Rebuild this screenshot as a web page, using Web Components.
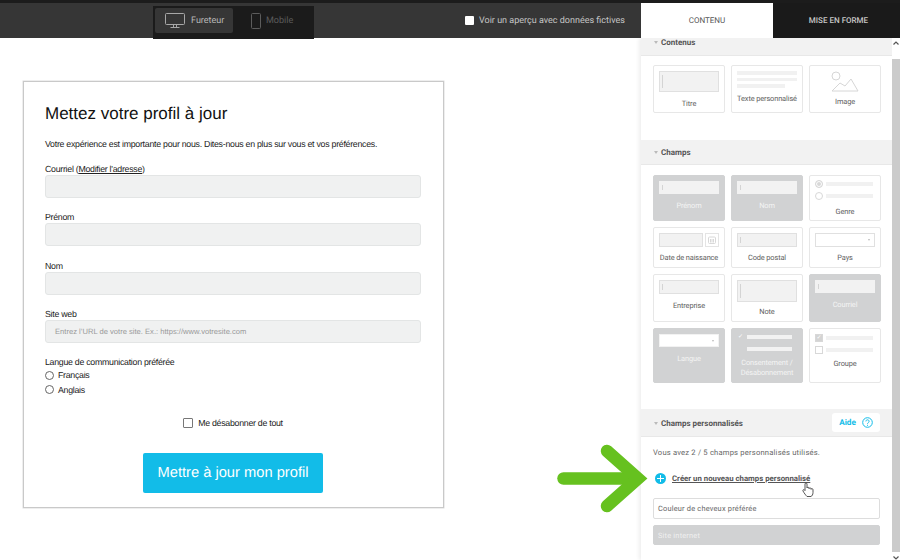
<!DOCTYPE html>
<html lang="fr">
<head>
<meta charset="utf-8">
<title>Profil</title>
<style>
  html, body { margin: 0; padding: 0; background: #fff; }
  body { width: 900px; height: 560px; overflow: hidden; position: relative; font-family: "Liberation Sans", Arial, sans-serif; text-rendering: geometricPrecision; }
</style>
</head>
<body>
<app-topbar></app-topbar>
<editor-main>
  <profile-form></profile-form>
  <side-panel></side-panel>
</editor-main>
<green-arrow></green-arrow>
<hand-cursor></hand-cursor>

<script>
class AppTopbar extends HTMLElement {
  constructor() {
    super();
    this.shadowDOM = this.attachShadow({ mode: "open" });
  }
  connectedCallback() {
    this.shadowDOM.innerHTML = `
      <style>
        :host { display: flex; height: 35px; background: #363636; border-top: 3px solid #1c1c1c; font-family: Roboto, sans-serif; }
        .left { width: 153px; }
        .switch { display: flex; width: 157px; height: 29px; margin-top: 3px; padding: 2px; background: #1b1b1b; }
        .btn { display: flex; align-items: center; height: 25px; font-size: 9px; }
        .on { width: 78px; background: #363636; border-radius: 2px; color: #b9b9b9; }
        .on svg { margin: 0 6px 0 10px; }
        .off { color: #5c5c5c; }
        .off svg { margin: 0 5px 0 18px; }
        .preview { display: flex; align-items: center; margin-left: 151px; width: 176px; font-size: 9px; color: #c4c4c4; white-space: nowrap; }
        .box { width: 9px; height: 9px; background: #fff; border-radius: 1px; margin-right: 5px; }
        .tab { display: flex; align-items: center; justify-content: center; box-sizing: border-box; font-size: 8px; }
        .content { width: 132px; background: #fff; color: #555; }
        .style { width: 127px; padding-left: 4px; background: #1a1a1a; color: #c8c8c8; font-weight: 500; }
      </style>
      <div class="left"></div>
      <div class="switch">
        <div class="btn on">
          <svg width="20" height="15" viewBox="0 0 20 15" fill="none" stroke="#a8a8a8" stroke-width="1"><rect x=".5" y=".5" width="19" height="11" rx="1"/><path d="M8.5 12v2M11.5 12v2M5.5 14.5h9"/></svg>
          <span>Fureteur</span>
        </div>
        <div class="btn off">
          <svg width="10" height="16" viewBox="0 0 10 16" fill="none" stroke="#5c5c5c" stroke-width="1"><rect x=".5" y=".5" width="9" height="15" rx="1"/></svg>
          <span>Mobile</span>
        </div>
      </div>
      <div class="preview"><div class="box"></div><span>Voir un aperçu avec données fictives</span></div>
      <div class="tab content">CONTENU</div>
      <div class="tab style">MISE EN FORME</div>`;
  }
}

class EditorMain extends HTMLElement {
  constructor() {
    super();
    this.shadowDOM = this.attachShadow({ mode: "open" });
  }
  connectedCallback() {
    this.shadowDOM.innerHTML = `
      <style>
        :host { display: flex; justify-content: space-between; height: 522px; overflow: hidden; }
      </style>
      <slot></slot>`;
  }
}

class FormField extends HTMLElement {
  constructor() {
    super();
    this.shadowDOM = this.attachShadow({ mode: "open" });
  }
  connectedCallback() {
    const hint = this.getAttribute("hint") || "";
    this.shadowDOM.innerHTML = `
      <style>
        :host { display: block; height: 48.3px; font-size: 8.8px; letter-spacing: -.28px; color: #222; }
        .lab { height: 12px; line-height: 12px; }
        .input { box-sizing: border-box; height: 23px; padding-left: 9px; line-height: 21px; background: #f0f1f1; border: 1px solid #e3e5e5; border-radius: 3px; font-size: 7.6px; letter-spacing: 0; color: #999; }
        ::slotted(a) { color: #222; }
      </style>
      <div class="lab"><slot></slot></div>
      <div class="input">${hint}</div>`;
  }
}

class ProfileForm extends HTMLElement {
  constructor() {
    super();
    this.shadowDOM = this.attachShadow({ mode: "open" });
  }
  connectedCallback() {
    this.shadowDOM.innerHTML = `
      <style>
        :host { display: block; box-sizing: border-box; width: 421px; height: 427px; margin: 43px 0 0 23px; padding: 21px 22px 0 21px; border: 1px solid #c9c9c9; box-shadow: 0 0 0 .5px #ddd; color: #222; }
        h1 { margin: 0; font-size: 17px; line-height: 21px; font-weight: 400; color: #111; }
        p { margin: 14px 0 13px; font-size: 8.8px; letter-spacing: -.27px; line-height: 12px; white-space: nowrap; }
        .lang { font-size: 8.8px; letter-spacing: -.28px; line-height: 12px; }
        .radio { display: flex; align-items: center; gap: 4px; height: 14.5px; }
        .radio i { width: 7px; height: 7px; border: 1px solid #666; border-radius: 50%; }
        .unsub { display: flex; justify-content: center; align-items: center; gap: 5px; margin-top: 19px; height: 14px; font-size: 8.8px; letter-spacing: -.28px; }
        .unsub i { box-sizing: border-box; width: 10px; height: 10px; border: 1px solid #777; border-radius: 1px; }
        .cta { width: 180px; height: 40px; margin: 23px auto 0; line-height: 41px; text-align: center; background: #12bce8; border-radius: 2px; color: #fff; font-size: 14.7px; }
      </style>
      <h1>Mettez votre profil à jour</h1>
      <p>Votre expérience est importante pour nous. Dites-nous en plus sur vous et vos préférences.</p>
      <form-field>Courriel (<a href="#">Modifier l'adresse</a>)</form-field>
      <form-field>Prénom</form-field>
      <form-field>Nom</form-field>
      <form-field hint="Entrez l’URL de votre site. Ex.: https://www.votresite.com">Site web</form-field>
      <div class="lang">
        <div>Langue de communication préférée</div>
        <div class="radio"><i></i><span>Français</span></div>
        <div class="radio"><i></i><span>Anglais</span></div>
      </div>
      <div class="unsub"><i></i><span>Me désabonner de tout</span></div>
      <div class="cta">Mettre à jour mon profil</div>`;
  }
}

class PanelHead extends HTMLElement {
  constructor() {
    super();
    this.shadowDOM = this.attachShadow({ mode: "open" });
  }
  connectedCallback() {
    this.shadowDOM.innerHTML = `
      <style>
        :host { display: flex; align-items: center; box-sizing: border-box; padding: 1px 12px 0 13px; background: #f2f2f2; border-bottom: 1px solid #e8e8e8; font-size: 8px; font-weight: 700; color: #555; }
        .tri { width: 0; height: 0; margin-right: 3px; border: 2px solid transparent; border-top: 3px solid #bbb; border-bottom: 0; }
        .txt { flex: 1; }
      </style>
      <span class="tri"></span><span class="txt"><slot></slot></span><slot name="extra"></slot>`;
  }
}

class FieldCard extends HTMLElement {
  constructor() {
    super();
    this.shadowDOM = this.attachShadow({ mode: "open" });
  }
  connectedCallback() {
    const kind = this.getAttribute("kind") || "input";
    const h = this.getAttribute("box") || 14;
    const gap = this.getAttribute("gap") || 6;
    const top = this.getAttribute("pad") || 5;
    const art = {
      input: `<div class="box" style="height:${h}px"><b class="caret"></b></div>`,
      select: `<div class="box white" style="height:${h}px"><b class="down"></b></div>`,
      date: `<div class="row6"><div class="box grow" style="height:${h}px"></div><div class="cal"><svg width="8" height="8" viewBox="0 0 8 8" fill="none" stroke="#d8d8d8"><rect x=".5" y="1" width="7" height="6.5" rx="1"/><path d="M2.5 3v3.5M4 3v3.5M5.5 3v3.5"/></svg></div></div>`,
      text: `<div class="lines"><u></u><u></u><u style="width:48px"></u></div>`,
      image: `<svg class="pic" width="28" height="21" viewBox="0 0 28 21" fill="none" stroke="#d6d6d6" stroke-width="1"><circle cx="5" cy="5" r="4"/><path d="M1 20l8-8 5 3 6-7 7 12z"/></svg>`,
      radio: `<div class="opts"><div><i class="dot on"></i><u></u></div><div><i class="dot"></i><u></u></div></div>`,
      check: `<div class="opts"><div><i class="sq on">✓</i><u></u></div><div><i class="sq"></i><u></u></div></div>`,
      consent: `<div class="opts consent"><div><span class="tick">✓</span><u></u></div><div><span class="tick"></span><u></u></div></div>`
    }[kind];
    this.shadowDOM.innerHTML = `
      <style>
        :host { display: block; box-sizing: border-box; padding: ${top}px 5px 0; background: #fff; border: 1px solid #e7e7e7; border-radius: 2px; font-size: 7.4px; letter-spacing: -.12px; line-height: 9.5px; color: #5e5e5e; text-align: center; }
        :host([active]) { background: #d1d2d3; border-color: #d1d2d3; color: #f4f4f4; }
        .lab { margin: ${gap}px -4px 0; }
        .box { position: relative; box-sizing: border-box; background: #f2f2f2; border: 1px solid #e0e0e0; }
        :host([active]) .box { border-color: #f2f2f2; }
        .white, :host([active]) .white { background: #fff; }
        .caret { position: absolute; left: 2px; top: 3px; bottom: 3px; width: 1px; background: #d4d4d4; }
        .down { position: absolute; right: 4px; top: 5px; border: 1.5px solid transparent; border-top: 2px solid #bbb; border-bottom: 0; }
        .row6 { display: flex; gap: 2px; }
        .grow { flex: 1; }
        .cal { display: flex; align-items: center; justify-content: center; width: 14px; border: 1px solid #e4e4e4; box-sizing: border-box; }
        .lines { display: flex; flex-direction: column; gap: 3px; }
        .lines u { display: block; width: 60px; height: 3.5px; background: #f1f1f1; }
        .pic { display: block; margin: 0 auto; }
        .opts { display: flex; flex-direction: column; gap: 4px; }
        .opts div { display: flex; align-items: center; gap: 3px; height: 8px; }
        .opts u { display: block; width: 47px; height: 4px; background: #f1f1f1; }
        .consent u { width: 45px; background: #f2f2f2; }
        .dot { box-sizing: border-box; width: 8px; height: 8px; border: 1px solid #d8d8d8; border-radius: 50%; }
        .dot.on { background: #d8d8d8; box-shadow: inset 0 0 0 1px #fff; }
        .sq { box-sizing: border-box; width: 8px; height: 8px; border: 1px solid #d8d8d8; font: 700 6px/6px "DejaVu Sans", sans-serif; color: #fff; text-align: center; }
        .sq.on { background: #d4d4d4; }
        .tick { width: 7px; font: 700 6px/8px "DejaVu Sans", sans-serif; color: #fff; }
      </style>
      ${art}
      <div class="lab"><slot></slot></div>`;
  }
}

class CardGrid extends HTMLElement {
  constructor() {
    super();
    this.shadowDOM = this.attachShadow({ mode: "open" });
  }
  connectedCallback() {
    this.shadowDOM.innerHTML = `
      <style>
        :host { display: grid; grid-template-columns: 72px 72px 72px; column-gap: 6px; row-gap: 6px; grid-template-rows: var(--rows); }
      </style>
      <slot></slot>`;
  }
}

class SidePanel extends HTMLElement {
  constructor() {
    super();
    this.shadowDOM = this.attachShadow({ mode: "open" });
  }
  connectedCallback() {
    this.shadowDOM.innerHTML = `
      <style>
        :host { display: flex; width: 259px; height: 522px; background: #fff; box-shadow: -2px 0 4px rgba(0,0,0,.07); font-family: Roboto, sans-serif; }
        .col { width: 251px; }
        .bar { display: flex; flex-direction: column; width: 8px; }
        .arrow { height: 21px; padding-top: 3px; box-sizing: border-box; }
        .thumb { height: 493px; background: #cbcbcb; }
        .end { flex: 1; padding-top: 4px; box-sizing: border-box; }
        .bar svg { display: block; margin: 0 auto; }
        .sec1 { height: 18px; padding-bottom: 9px; }
        .sec2 { height: 25px; }
        .sec3 { height: 28px; }
        .body1 { height: 75px; padding: 9px 12px 0; --rows: 48px; }
        .body2 { height: 234px; padding: 10px 12px 0; --rows: 46px 41px 48px 55px; }
        .aide { display: flex; align-items: center; justify-content: center; gap: 6px; width: 48px; height: 19px; margin-top: -1px; background: #fff; border-radius: 3px; color: #12bce8; font-size: 8.2px; font-weight: 700; }
        .body3 { padding: 0 12px; font-size: 7.6px; color: #666; letter-spacing: .2px; }
        .count { margin-top: 11px; line-height: 10px; }
        .create { display: flex; align-items: center; gap: 6px; margin: 14px 0 0 2px; height: 12px; font-weight: 700; color: #555; text-decoration: underline; font-size: 7.8px; letter-spacing: 0; }
        .plus { display: flex; align-items: center; justify-content: center; width: 11px; height: 11px; background: #12bce8; border-radius: 50%; }
        .item { box-sizing: border-box; height: 21px; padding-left: 4px; line-height: 20px; border: 1px solid #ddd; border-radius: 2px; font-size: 7.4px; color: #666; }
        .first { margin-top: 14px; }
        .dis { height: 20px; margin-top: 6px; line-height: 19px; background: #d1d2d3; border-color: #d1d2d3; color: #f0f0f0; }
      </style>
      <div class="col">
        <panel-head class="sec1">Contenus</panel-head>
        <div class="body1"><card-grid>
          <field-card box="21" gap="7">Titre</field-card>
          <field-card kind="text" gap="6">Texte personnalisé</field-card>
          <field-card kind="image" gap="5">Image</field-card>
        </card-grid></div>
        <panel-head class="sec2">Champs</panel-head>
        <div class="body2"><card-grid>
          <field-card active box="13" gap="7">Prénom</field-card>
          <field-card active box="13" gap="7">Nom</field-card>
          <field-card kind="radio" gap="7" pad="4">Genre</field-card>
          <field-card kind="date" gap="6">Date de naissance</field-card>
          <field-card gap="6">Code postal</field-card>
          <field-card kind="select" gap="6">Pays</field-card>
          <field-card gap="7">Entreprise</field-card>
          <field-card box="22" gap="5">Note</field-card>
          <field-card active box="13" gap="7">Courriel</field-card>
          <field-card active kind="select" box="13" gap="7">Langue</field-card>
          <field-card active kind="consent" gap="5" pad="4">Consentement /<br>Désabonnement</field-card>
          <field-card kind="check" gap="5">Groupe</field-card>
        </card-grid></div>
        <panel-head class="sec3">Champs personnalisés
          <div class="aide" slot="extra"><span>Aide</span>
            <svg width="11" height="11" viewBox="0 0 11 11" fill="none" stroke="#12bce8"><circle cx="5.5" cy="5.5" r="4.8"/><path d="M3.9 4.4c0-2.1 3.2-2.1 3.2 0 0 1.3-1.6 1.2-1.6 2.4M5.5 7.8v1"/></svg>
          </div>
        </panel-head>
        <div class="body3">
          <div class="count">Vous avez 2 / 5 champs personnalisés utilisés.</div>
          <div class="create"><span class="plus"><svg width="7" height="7" viewBox="0 0 7 7" stroke="#fff"><path d="M3.5 0v7M0 3.5h7"/></svg></span><span>Créer un nouveau champs personnalisé</span></div>
          <div class="item first">Couleur de cheveux préférée</div>
          <div class="item dis">Site internet</div>
        </div>
      </div>
      <div class="bar">
        <div class="arrow"><svg width="6" height="4" viewBox="0 0 6 4" fill="none" stroke="#555" stroke-width="1.2"><path d="M.5 3.5L3 1l2.5 2.5"/></svg></div>
        <div class="thumb"></div>
        <div class="end"><svg width="6" height="4" viewBox="0 0 6 4" fill="none" stroke="#555" stroke-width="1.2"><path d="M.5.5L3 3 5.5.5"/></svg></div>
      </div>`;
  }
}

// annotation drawn over the screenshot
class GreenArrow extends HTMLElement {
  constructor() {
    super();
    this.shadowDOM = this.attachShadow({ mode: "open" });
  }
  connectedCallback() {
    this.shadowDOM.innerHTML = `
      <style>:host { position: absolute; left: 550px; top: 440px; width: 100px; height: 78px; }</style>
      <svg width="100" height="78" viewBox="550 440 100 78" fill="none" stroke="#66c11f" stroke-width="12.5" stroke-linecap="round" stroke-linejoin="miter">
        <path d="M563.5 478.5H636"/>
        <path d="M607 451l31 27.5-31 27.5"/>
      </svg>`;
  }
}

class HandCursor extends HTMLElement {
  constructor() {
    super();
    this.shadowDOM = this.attachShadow({ mode: "open" });
  }
  connectedCallback() {
    this.shadowDOM.innerHTML = `
      <style>:host { position: absolute; left: 802px; top: 482px; width: 12px; height: 16px; }</style>
      <svg width="12" height="16" viewBox="0 0 12 16" fill="#fff" stroke="#444" stroke-width=".9" stroke-linejoin="round">
        <path d="M3 8V2c0-1.4 2-1.4 2 0v4c0-1 2-1 2 0v.6c0-1 2-1 2 0v.7c0-.9 2-.8 2 .2v3c0 2-1 3.5-2 4H5c-1-1-3-3.5-4-5.5-.6-1.3 1-2 2-.5z"/>
      </svg>`;
  }
}

customElements.define("app-topbar", AppTopbar);
customElements.define("editor-main", EditorMain);
customElements.define("form-field", FormField);
customElements.define("profile-form", ProfileForm);
customElements.define("panel-head", PanelHead);
customElements.define("field-card", FieldCard);
customElements.define("card-grid", CardGrid);
customElements.define("side-panel", SidePanel);
customElements.define("green-arrow", GreenArrow);
customElements.define("hand-cursor", HandCursor);
</script>
</body>
</html>
